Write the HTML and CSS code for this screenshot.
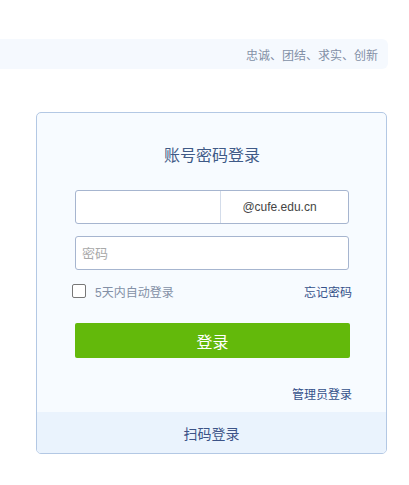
FILE: index.html
```html
<!DOCTYPE html>
<html lang="zh-CN">
<head>
<meta charset="utf-8">
<title>登录</title>
<link rel="stylesheet" href="styles.css">
</head>
<body>
<div class="banner"><span>忠诚、团结、求实、创新</span></div>
<div class="card">
  <div class="card-body">
    <h2 class="title">账号密码登录</h2>
    <div class="field field-user">
      <input class="user-input" type="text">
      <span class="suffix">@cufe.edu.cn</span>
    </div>
    <div class="field">
      <input class="pwd-input" type="password" placeholder="密码">
    </div>
    <div class="options">
      <label class="remember"><span class="box"></span>5天内自动登录</label>
      <a class="link">忘记密码</a>
    </div>
    <button class="btn">登录</button>
    <div class="admin"><a class="link">管理员登录</a></div>
  </div>
  <div class="card-foot">扫码登录</div>
</div>
</body>
</html>
```
FILE: styles.css
```css
* { box-sizing: border-box; }
body {
  margin: 0;
  padding-top: 39px;
  font-family: "Liberation Sans", "Noto Sans CJK SC", sans-serif;
  background: #fff;
}
.banner {
  width: 388px;
  height: 30px;
  background: #f5f9fe;
  border-radius: 0 6px 6px 0;
  display: flex;
  align-items: center;
  justify-content: flex-end;
  padding-right: 10px;
  font-size: 12px;
  color: #8390a6;
}
.card {
  margin: 43px 0 0 36px;
  width: 351px;
  border: 1px solid #b3c8e4;
  border-radius: 5px;
  background: #f7fbff;
  overflow: hidden;
}
.card-body {
  padding: 32px 37px 0 38px;
  display: flex;
  flex-direction: column;
}
.title {
  margin: 0 0 23px;
  font-size: 16px;
  font-weight: normal;
  line-height: 22px;
  text-align: center;
  color: #3f5a87;
}
.field {
  height: 34px;
  border: 1px solid #a6b5cf;
  border-radius: 3px;
  background: #fff;
  display: flex;
  margin-bottom: 12px;
}
.field input {
  border: 0;
  outline: 0;
  background: transparent;
  font: inherit;
  font-size: 13px;
  padding: 0 6px;
  min-width: 0;
  flex: 1;
}
.field input::placeholder { color: #a9a9a9; }
.user-input { border-right: 1px solid #d3dcea !important; }
.suffix {
  width: 127px;
  flex: none;
  display: flex;
  align-items: center;
  justify-content: center;
  padding-right: 10px;
  font-size: 12px;
  color: #444;
}
.options {
  margin: 0 -3px 1px -3px;
  height: 18px;
  display: flex;
  align-items: center;
  justify-content: space-between;
  font-size: 12px;
}
.remember {
  display: flex;
  align-items: center;
  color: #8390a6;
}
.box {
  width: 14px;
  height: 14px;
  border: 1px solid #777;
  border-radius: 2px;
  background: #fff;
  margin-right: 9px;
}
.link {
  color: #34508a;
  font-size: 12px;
}
.btn {
  margin-top: 22px;
  height: 35px;
  border: 0;
  border-radius: 2px;
  background: #63b90b;
  color: #fff;
  font: inherit;
  font-size: 16px;
  width: 275px;
}
.admin {
  margin: 28px -3px 0 0;
  height: 16px;
  line-height: 16px;
  text-align: right;
  margin-bottom: 10px;
}
.card-foot {
  height: 41px;
  background: #eaf3fd;
  display: flex;
  align-items: center;
  justify-content: center;
  font-size: 14px;
  color: #3c5387;
}
```
